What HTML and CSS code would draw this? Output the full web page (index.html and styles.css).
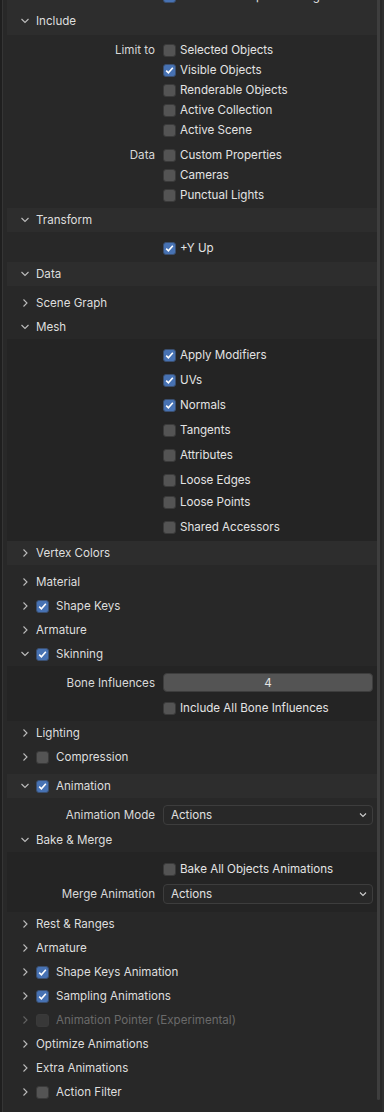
FILE: index.html
```html
<!DOCTYPE html>
<html lang="en">
<head>
  <meta charset="UTF-8">
  <meta name="viewport" content="width=device-width, initial-scale=1.0">
  <title>glTF Export Options</title>
  <link rel="stylesheet" href="styles.css">
</head>
<body>
  <div class="editor">
    <div class="edge-dark"></div>
    <div class="edge-line"></div>
    <div class="region">

      <div class="top-block">
        <div class="prop-row top-row">
          <span class="label"></span>
          <label class="check"><span class="box on"></span>Remember Export Settings</label>
        </div>
        <div class="head first open"><span class="chev"></span>Include</div>
      </div>

      <!-- Include -->
      <div class="body include-body">
        <div class="group">
          <div class="prop-row"><span class="label">Limit to</span><label class="check"><span class="box"></span>Selected Objects</label></div>
          <div class="prop-row"><span class="label"></span><label class="check"><span class="box on"></span>Visible Objects</label></div>
          <div class="prop-row"><span class="label"></span><label class="check"><span class="box"></span>Renderable Objects</label></div>
          <div class="prop-row"><span class="label"></span><label class="check"><span class="box"></span>Active Collection</label></div>
          <div class="prop-row"><span class="label"></span><label class="check"><span class="box"></span>Active Scene</label></div>
        </div>
        <div class="group">
          <div class="prop-row"><span class="label">Data</span><label class="check"><span class="box"></span>Custom Properties</label></div>
          <div class="prop-row"><span class="label"></span><label class="check"><span class="box"></span>Cameras</label></div>
          <div class="prop-row"><span class="label"></span><label class="check"><span class="box"></span>Punctual Lights</label></div>
        </div>
      </div>

      <!-- Transform -->
      <div class="head open"><span class="chev"></span>Transform</div>
      <div class="body transform-body">
        <div class="prop-row"><span class="label"></span><label class="check"><span class="box on"></span>+Y Up</label></div>
      </div>

      <!-- Data -->
      <div class="head open"><span class="chev"></span>Data</div>
      <div class="body data-body">
        <div class="head sub"><span class="chev"></span>Scene Graph</div>
        <div class="head sub open"><span class="chev"></span>Mesh</div>
        <div class="sub-body mesh-body">
          <div class="prop-row tall"><span class="label"></span><label class="check"><span class="box on"></span>Apply Modifiers</label></div>
          <div class="prop-row tall"><span class="label"></span><label class="check"><span class="box on"></span>UVs</label></div>
          <div class="prop-row tall"><span class="label"></span><label class="check"><span class="box on"></span>Normals</label></div>
          <div class="prop-row tall"><span class="label"></span><label class="check"><span class="box"></span>Tangents</label></div>
          <div class="prop-row tall"><span class="label"></span><label class="check"><span class="box"></span>Attributes</label></div>
          <div class="prop-row mid"><span class="label"></span><label class="check"><span class="box"></span>Loose Edges</label></div>
          <div class="prop-row tall"><span class="label"></span><label class="check"><span class="box"></span>Loose Points</label></div>
          <div class="prop-row"><span class="label"></span><label class="check"><span class="box"></span>Shared Accessors</label></div>
          <div class="head subsub"><span class="chev"></span>Vertex Colors</div>
        </div>
        <div class="head sub"><span class="chev"></span>Material</div>
        <div class="head sub"><span class="chev"></span><span class="box on"></span>Shape Keys</div>
        <div class="head sub"><span class="chev"></span>Armature</div>
        <div class="head sub open"><span class="chev"></span><span class="box on"></span>Skinning</div>
        <div class="sub-body skin-body">
          <div class="prop-row tall"><span class="label">Bone Influences</span><div class="number">4</div></div>
          <div class="prop-row"><span class="label"></span><label class="check"><span class="box"></span>Include All Bone Influences</label></div>
        </div>
        <div class="head sub"><span class="chev"></span>Lighting</div>
        <div class="head sub"><span class="chev"></span><span class="box"></span>Compression</div>
      </div>

      <!-- Animation -->
      <div class="head open"><span class="chev"></span><span class="box on"></span>Animation</div>
      <div class="body anim-body">
        <div class="prop-row"><span class="label">Animation Mode</span><div class="select">Actions<span class="chev"></span></div></div>
        <div class="head sub open"><span class="chev"></span>Bake &amp; Merge</div>
        <div class="sub-body bake-body">
          <div class="prop-row tall"><span class="label"></span><label class="check"><span class="box"></span>Bake All Objects Animations</label></div>
          <div class="prop-row"><span class="label">Merge Animation</span><div class="select">Actions<span class="chev"></span></div></div>
        </div>
        <div class="head sub"><span class="chev"></span>Rest &amp; Ranges</div>
        <div class="head sub"><span class="chev"></span>Armature</div>
        <div class="head sub"><span class="chev"></span><span class="box on"></span>Shape Keys Animation</div>
        <div class="head sub"><span class="chev"></span><span class="box on"></span>Sampling Animations</div>
        <div class="head sub disabled"><span class="chev"></span><span class="box"></span>Animation Pointer (Experimental)</div>
        <div class="head sub"><span class="chev"></span>Optimize Animations</div>
        <div class="head sub"><span class="chev"></span>Extra Animations</div>
        <div class="head sub"><span class="chev"></span><span class="box"></span>Action Filter</div>
      </div>

    </div>
    <div class="scroll-track"><div class="scroll-thumb"></div></div>
    <div class="edge-right"></div>
  </div>
</body>
</html>
```

FILE: styles.css
```css
body {
  margin: 0;
  background-color: #282828;
  font-family: Inter, "Noto Sans", sans-serif;
  font-size: 11.6px;
  color: #e3e3e3;
}

.editor {
  display: flex;
  width: 384px;
  height: 1112px;
  overflow: hidden;
  background-color: #282828;
}

.edge-dark {
  width: 2px;
  background-color: #1f1f1f;
}
.edge-line {
  width: 1px;
  background-color: #353535;
}

.region {
  flex: 1;
  padding-left: 4px;
  display: flex;
  flex-direction: column;
}

.scroll-track {
  width: 4px;
  padding-right: 1px;
}
.scroll-thumb {
  width: 3px;
  height: 1100px;
  background-color: #3e3e3e;
  border-radius: 0 0 2px 2px;
}
.edge-right {
  width: 2px;
  background-color: #2e2e2e;
}

/* top part, already scrolled past */
.top-block {
  background-color: #2d2d2d;
  margin-top: -14px;
}
.top-row {
  height: 20px;
}

/* panel headers */
.head {
  height: 24px;
  display: flex;
  align-items: center;
  padding-left: 14px;
  background-color: #2d2d2d;
  color: #dedede;
  white-space: nowrap;
}
.head.first {
  height: 29px;
}
.head .chev {
  width: 15px;
  height: 8px;
  flex-shrink: 0;
  background: url("data:image/svg+xml,%3Csvg xmlns='http://www.w3.org/2000/svg' width='8' height='8' viewBox='0 0 8 8'%3E%3Cpath d='M2.5 0.5 L6 4 L2.5 7.5' fill='none' stroke='%23bdbdbd' stroke-width='1.1'/%3E%3C/svg%3E") no-repeat left center;
}
.head.open .chev {
  background-image: url("data:image/svg+xml,%3Csvg xmlns='http://www.w3.org/2000/svg' width='8' height='8' viewBox='0 0 8 8'%3E%3Cpath d='M0.5 2 L4 5.5 L7.5 2' fill='none' stroke='%23bdbdbd' stroke-width='1.1'/%3E%3C/svg%3E");
}
.head .box {
  margin-right: 7px;
}
.head.disabled {
  color: #6a6a6a;
}
.head.disabled .chev {
  opacity: 0.4;
}
.head.disabled .box {
  background-color: #383838;
}

.sub {
  background-color: #282828;
}

/* panel bodies */
.body {
  background-color: #282828;
}
.include-body {
  padding: 5px 0 3px;
  display: flex;
  flex-direction: column;
  gap: 5px;
}
.transform-body {
  padding: 6px 0 4px;
}
.data-body {
  padding: 5px 0 5px;
}
.anim-body {
  padding: 7px 0 8px;
}

.sub-body {
  background-color: #242424;
}
.mesh-body {
  padding-top: 6px;
}
.mesh-body .subsub {
  margin-top: 4px;
  margin-bottom: 5px;
  background-color: #2d2d2d;
}
.skin-body {
  padding: 7px 0 3px;
}
.bake-body {
  padding: 7px 0 8px;
}
.anim-body > .prop-row {
  margin-bottom: 3px;
}

/* property rows */
.prop-row {
  display: grid;
  grid-template-columns: 148px 210px;
  column-gap: 8px;
  align-items: center;
  height: 20px;
}
.prop-row.tall {
  height: 25px;
  align-items: start;
}
.prop-row.tall .check,
.prop-row.tall .label {
  height: 20px;
}
.prop-row.mid {
  height: 22px;
  align-items: start;
}
.prop-row.mid .check {
  height: 20px;
}

.label {
  text-align: right;
  color: #d8d8d8;
  display: flex;
  align-items: center;
  justify-content: flex-end;
}

.check {
  display: flex;
  align-items: center;
  gap: 4px;
  white-space: nowrap;
}

.box {
  width: 13px;
  height: 13px;
  box-sizing: border-box;
  border-radius: 3px;
  background-color: #545454;
  border: 1px solid #3a3a3a;
  flex-shrink: 0;
}
.box.on {
  background: #4772b3 url("data:image/svg+xml,%3Csvg xmlns='http://www.w3.org/2000/svg' width='11' height='11' viewBox='0 0 11 11'%3E%3Cpath d='M2.2 5.6 L4.4 7.8 L8.8 2.8' fill='none' stroke='%23ffffff' stroke-width='1.6'/%3E%3C/svg%3E") no-repeat center;
  border-color: #3a4f70;
}

.number {
  height: 19px;
  box-sizing: border-box;
  border-radius: 4px;
  background-color: #545454;
  border: 1px solid #3d3d3d;
  display: flex;
  align-items: center;
  justify-content: center;
  color: #e6e6e6;
}

.select {
  height: 20px;
  box-sizing: border-box;
  border-radius: 4px;
  background-color: #282828;
  border: 1px solid #3d3d3d;
  display: flex;
  align-items: center;
  justify-content: space-between;
  padding: 0 5px 0 7px;
  color: #e0e0e0;
}
.select .chev {
  width: 8px;
  height: 8px;
  background: url("data:image/svg+xml,%3Csvg xmlns='http://www.w3.org/2000/svg' width='8' height='8' viewBox='0 0 8 8'%3E%3Cpath d='M1 2.5 L4 5.5 L7 2.5' fill='none' stroke='%23cfcfcf' stroke-width='1.1'/%3E%3C/svg%3E") no-repeat center;
}
```
